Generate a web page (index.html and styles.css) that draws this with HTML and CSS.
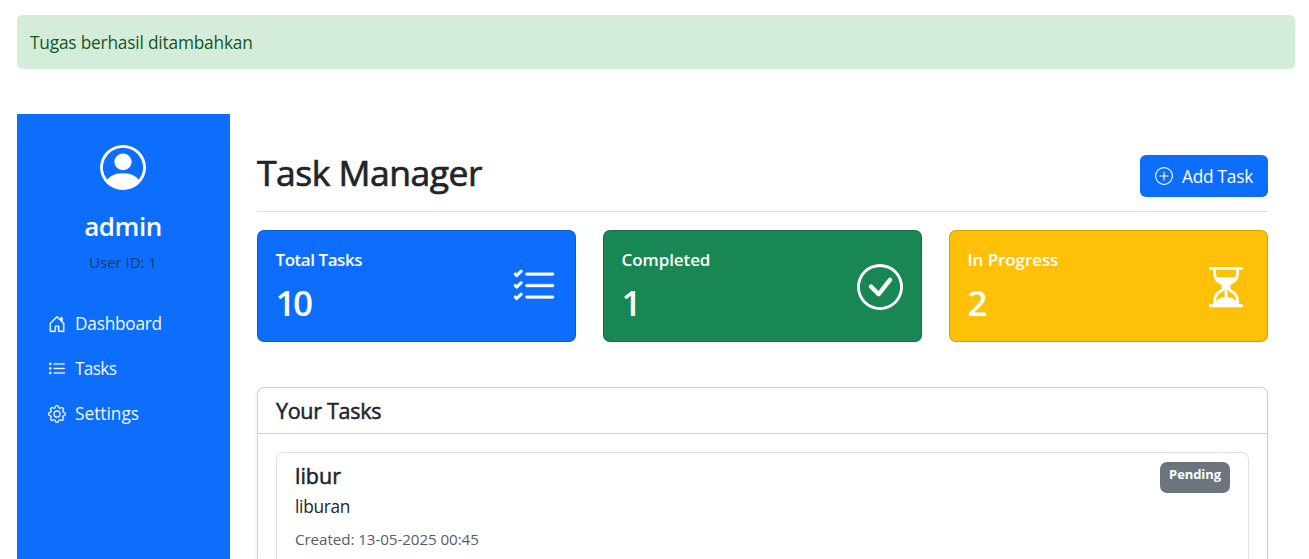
FILE: index.html
```html
<!DOCTYPE html>
<html lang="id">
<head>
<meta charset="utf-8">
<title>Task Manager</title>
<link rel="stylesheet" href="styles.css">
</head>
<body>
<div class="alert"><span class="alert-text">Tugas berhasil ditambahkan</span></div>
<div class="layout">
  <aside class="sidebar">
    <div class="profile">
      <svg class="avatar" viewBox="0 0 16 16" preserveAspectRatio="none" fill="currentColor"><path d="M11 6a3 3 0 1 1-6 0 3 3 0 0 1 6 0"/><path fill-rule="evenodd" d="M0 8a8 8 0 1 1 16 0A8 8 0 0 1 0 8m8-7a7 7 0 0 0-5.468 11.37C3.242 11.226 4.805 10 8 10s4.757 1.225 5.468 2.37A7 7 0 0 0 8 1"/></svg>
      <h4 class="username">admin</h4>
      <small class="user-id">User ID: 1</small>
    </div>
    <nav class="nav">
      <a class="nav-link"><svg class="icon" viewBox="0 0 16 16" fill="currentColor" stroke="currentColor" stroke-width=".25"><path d="M8.354 1.146a.5.5 0 0 0-.708 0l-6 6A.5.5 0 0 0 1.5 7.5v7a.5.5 0 0 0 .5.5h4.5a.5.5 0 0 0 .5-.5v-4h2v4a.5.5 0 0 0 .5.5H14a.5.5 0 0 0 .5-.5v-7a.5.5 0 0 0-.146-.354L13 5.793V2.5a.5.5 0 0 0-.5-.5h-1a.5.5 0 0 0-.5.5v1.293zM2.5 14V7.707l5.5-5.5 5.5 5.5V14H10v-4a.5.5 0 0 0-.5-.5h-3a.5.5 0 0 0-.5.5v4z"/></svg><span class="t-dashboard">Dashboard</span></a>
      <a class="nav-link"><svg class="icon" viewBox="0 0 16 16" fill="currentColor" stroke="currentColor" stroke-width=".25"><path fill-rule="evenodd" d="M5 11.5a.5.5 0 0 1 .5-.5h9a.5.5 0 0 1 0 1h-9a.5.5 0 0 1-.5-.5m0-4a.5.5 0 0 1 .5-.5h9a.5.5 0 0 1 0 1h-9a.5.5 0 0 1-.5-.5m0-4a.5.5 0 0 1 .5-.5h9a.5.5 0 0 1 0 1h-9a.5.5 0 0 1-.5-.5m-3 1a1 1 0 1 0 0-2 1 1 0 0 0 0 2m0 4a1 1 0 1 0 0-2 1 1 0 0 0 0 2m0 4a1 1 0 1 0 0-2 1 1 0 0 0 0 2"/></svg><span class="t-tasks">Tasks</span></a>
      <a class="nav-link"><svg class="icon" viewBox="0 0 16 16" fill="currentColor" stroke="currentColor" stroke-width=".15"><path d="M8 4.754a3.246 3.246 0 1 0 0 6.492 3.246 3.246 0 0 0 0-6.492M5.754 8a2.246 2.246 0 1 1 4.492 0 2.246 2.246 0 0 1-4.492 0"/><path d="M9.796 1.343c-.527-1.79-3.065-1.79-3.592 0l-.094.319a.873.873 0 0 1-1.255.52l-.292-.16c-1.64-.892-3.433.902-2.54 2.541l.159.292a.873.873 0 0 1-.52 1.255l-.319.094c-1.79.527-1.79 3.065 0 3.592l.319.094a.873.873 0 0 1 .52 1.255l-.16.292c-.892 1.64.901 3.434 2.541 2.54l.292-.159a.873.873 0 0 1 1.255.52l.094.319c.527 1.79 3.065 1.79 3.592 0l.094-.319a.873.873 0 0 1 1.255-.52l.292.16c1.64.893 3.434-.902 2.54-2.541l-.159-.292a.873.873 0 0 1 .52-1.255l.319-.094c1.79-.527 1.79-3.065 0-3.592l-.319-.094a.873.873 0 0 1-.52-1.255l.16-.292c.893-1.64-.902-3.433-2.541-2.54l-.292.159a.873.873 0 0 1-1.255-.52zm-2.633.283c.246-.835 1.428-.835 1.674 0l.094.319a1.873 1.873 0 0 0 2.693 1.115l.291-.16c.764-.415 1.6.42 1.184 1.185l-.159.292a1.873 1.873 0 0 0 1.116 2.692l.318.094c.835.246.835 1.428 0 1.674l-.319.094a1.873 1.873 0 0 0-1.115 2.693l.16.291c.415.764-.42 1.6-1.185 1.184l-.291-.159a1.873 1.873 0 0 0-2.693 1.116l-.094.318c-.246.835-1.428.835-1.674 0l-.094-.319a1.873 1.873 0 0 0-2.692-1.115l-.292.16c-.764.415-1.6-.42-1.184-1.185l.159-.291A1.873 1.873 0 0 0 1.945 8.93l-.319-.094c-.835-.246-.835-1.428 0-1.674l.319-.094A1.873 1.873 0 0 0 3.06 4.377l-.16-.292c-.415-.764.42-1.6 1.185-1.184l.292.159a1.873 1.873 0 0 0 2.692-1.115z"/></svg><span class="t-settings">Settings</span></a>
    </nav>
  </aside>
  <main class="content">
    <header class="page-head">
      <h1 class="page-title">Task Manager</h1>
      <button class="add-btn"><svg class="icon" viewBox="0 0 16 16" fill="currentColor"><path d="M8 15A7 7 0 1 1 8 1a7 7 0 0 1 0 14m0 1A8 8 0 1 0 8 0a8 8 0 0 0 0 16"/><path d="M8 4a.5.5 0 0 1 .5.5v3h3a.5.5 0 0 1 0 1h-3v3a.5.5 0 0 1-1 0v-3h-3a.5.5 0 0 1 0-1h3v-3A.5.5 0 0 1 8 4"/></svg><span>Add Task</span></button>
    </header>
    <section class="stats">
      <div class="stat stat-blue">
        <div><h5 class="stat-label t-total">Total Tasks</h5><div class="stat-value">10</div></div>
        <svg class="stat-icon" viewBox="0 0 16 16" fill="currentColor" stroke="currentColor" stroke-width=".12"><path fill-rule="evenodd" d="M5 11.5a.5.5 0 0 1 .5-.5h9a.5.5 0 0 1 0 1h-9a.5.5 0 0 1-.5-.5m0-4a.5.5 0 0 1 .5-.5h9a.5.5 0 0 1 0 1h-9a.5.5 0 0 1-.5-.5m0-4a.5.5 0 0 1 .5-.5h9a.5.5 0 0 1 0 1h-9a.5.5 0 0 1-.5-.5M3.854 2.146a.5.5 0 0 1 0 .708l-1.5 1.5a.5.5 0 0 1-.708 0l-.5-.5a.5.5 0 1 1 .708-.708L2 3.293l1.146-1.147a.5.5 0 0 1 .708 0m0 4a.5.5 0 0 1 0 .708l-1.5 1.5a.5.5 0 0 1-.708 0l-.5-.5a.5.5 0 1 1 .708-.708L2 7.293l1.146-1.147a.5.5 0 0 1 .708 0m0 4a.5.5 0 0 1 0 .708l-1.5 1.5a.5.5 0 0 1-.708 0l-.5-.5a.5.5 0 0 1 .708-.708l.146.147 1.146-1.147a.5.5 0 0 1 .708 0"/></svg>
      </div>
      <div class="stat stat-green">
        <div><h5 class="stat-label">Completed</h5><div class="stat-value">1</div></div>
        <svg class="stat-icon" viewBox="0 0 16 16" fill="currentColor"><path d="M8 15A7 7 0 1 1 8 1a7 7 0 0 1 0 14m0 1A8 8 0 1 0 8 0a8 8 0 0 0 0 16"/><path d="m10.97 4.97-.02.022-3.473 4.425-2.093-2.094a.75.75 0 0 0-1.06 1.06L6.97 11.03a.75.75 0 0 0 1.079-.02l3.992-4.99a.75.75 0 0 0-1.071-1.05"/></svg>
      </div>
      <div class="stat stat-yellow">
        <div><h5 class="stat-label">In Progress</h5><div class="stat-value">2</div></div>
        <svg class="stat-icon" viewBox="0 0 16 16" fill="currentColor"><path d="M2.5 15a.5.5 0 1 1 0-1h1v-1a4.5 4.5 0 0 1 2.557-4.06c.29-.139.443-.377.443-.59v-.7c0-.213-.154-.451-.443-.59A4.5 4.5 0 0 1 3.5 3V2h-1a.5.5 0 0 1 0-1h11a.5.5 0 0 1 0 1h-1v1a4.5 4.5 0 0 1-2.557 4.06c-.29.139-.443.377-.443.59v.7c0 .213.154.451.443.59A4.5 4.5 0 0 1 12.5 13v1h1a.5.5 0 0 1 0 1zm2-13v1c0 .537.12 1.045.337 1.5h6.326c.216-.455.337-.963.337-1.5V2zm3 6.35c0 .701-.478 1.236-1.011 1.492A3.5 3.5 0 0 0 4.5 13s.866-1.299 3-1.48zm1 0v3.17c2.134.181 3 1.48 3 1.48a3.5 3.5 0 0 0-1.989-3.158C8.978 9.586 8.5 9.052 8.5 8.351z"/></svg>
      </div>
    </section>
    <section class="card">
      <div class="card-head"><h5 class="card-title">Your Tasks</h5></div>
      <div class="card-body">
        <article class="task">
          <div>
            <h5 class="task-title">libur</h5>
            <p class="task-desc">liburan</p>
            <small class="task-date">Created: 13-05-2025 00:45</small>
          </div>
          <span class="badge">Pending</span>
        </article>
      </div>
    </section>
  </main>
</div>
</body>
</html>
```
FILE: styles.css
```css
* { box-sizing: border-box; }
body {
  display: flex;
  flex-direction: column;
  margin: 0;
  height: 100vh;
  overflow: hidden;
  padding: 15px 14px 0 17px;
  background: #fff;
  color: #212529;
  font-family: "Open Sans", "Noto Sans", sans-serif;
  font-size: 17.3px;
  line-height: 27px;
}
h1, h4, h5, p { margin: 0; }
svg { flex: none; display: block; }
.alert {
  flex: none;
  height: 54px;
  padding: 14px 13px;
  border-radius: 5px;
  background: #d4edda;
  color: #155724;
}
.alert-text { letter-spacing: -.19px; }
.layout { display: flex; flex: 1; min-height: 0; margin-top: 45px; }
.sidebar {
  flex: none;
  width: 213px;
  padding-top: 31px;
  background: #0d6efd;
  color: #fff;
}
.profile { display: flex; flex-direction: column; align-items: center; padding-right: 1px; }
.avatar { width: 46px; height: 45px; }
.username { margin-top: 20px; font-size: 26px; font-weight: 600; line-height: 32px; letter-spacing: -.45px; }
.user-id { margin-top: 8px; font-size: 15.2px; line-height: 24px; letter-spacing: -.1px; color: rgba(33, 37, 41, .75); }
.nav { margin-top: 27px; padding-left: 31px; }
.nav-link { display: flex; align-items: center; gap: 9px; height: 45px; color: rgba(255, 255, 255, .97); }
.t-dashboard { letter-spacing: -.25px; }
.t-tasks { letter-spacing: -.7px; }
.icon { width: 18px; height: 18px; }
.content {
  display: flex;
  flex: 1;
  flex-direction: column;
  min-height: 0;
  padding: 41px 27px 0;
}
.page-head {
  display: flex;
  flex: none;
  justify-content: space-between;
  height: 57px;
  border-bottom: 1px solid #dee2e6;
}
.page-title {
  font-size: 35.5px;
  font-weight: 500;
  line-height: 35px;
  letter-spacing: -.5px;
  -webkit-text-stroke: .7px currentColor;
}
.add-btn {
  display: flex;
  align-items: center;
  gap: 9px;
  width: 128px;
  height: 42px;
  padding: 0 0 0 15px;
  border: 0;
  border-radius: 6px;
  background: #0d6efd;
  color: #fff;
  font: inherit;
  letter-spacing: -.25px;
  white-space: nowrap;
}
.stats { display: grid; flex: none; grid-template-columns: repeat(3, 319px); gap: 27px; margin-top: 18px; }
.stat {
  display: flex;
  justify-content: space-between;
  align-items: center;
  height: 112px;
  padding: 0 18px 0 17.5px;
  border: 1px solid rgba(0, 0, 0, .175);
  border-radius: 7px;
  color: #fff;
}
.stat-blue { background-color: #0d6efd; }
.stat-green { background-color: #198754; }
.stat-yellow { background-color: #ffc107; }
.stat-label { font-size: 17px; font-weight: 600; line-height: 22px; letter-spacing: -.08px; }
.t-total { letter-spacing: -.45px; }
.stat-value { margin-top: 10px; font-size: 35px; font-weight: 600; line-height: 43px; letter-spacing: -2.5px; }
.stat-icon { width: 46px; height: 46px; margin-top: 2px; }
.card {
  display: flex;
  flex: 1;
  flex-direction: column;
  min-height: 0;
  margin-top: 45px;
  border: 1px solid #d0d1d2;
  border-bottom: 0;
  border-radius: 7px 7px 0 0;
  box-shadow: 0 2px 4px rgba(0, 0, 0, .075);
}
.card-head { flex: none; height: 46px; padding: 9px 18px; border-bottom: 1px solid #d0d1d2; }
.card-title, .task-title {
  font-size: 21.5px;
  font-weight: 500;
  line-height: 27px;
  letter-spacing: -.3px;
  -webkit-text-stroke: .5px currentColor;
}
.task-title { letter-spacing: 0; }
.card-body { display: flex; flex: 1; min-height: 0; padding: 18px 18px 0; }
.task {
  display: flex;
  flex: 1;
  justify-content: space-between;
  padding: 9px 18px 0;
  border: 1px solid #dee2e6;
  border-bottom: 0;
  border-radius: 7px 7px 0 0;
}
.task-desc { margin-top: 4px; letter-spacing: -.3px; }
.task-date { display: block; margin-top: 7px; font-size: 15.2px; line-height: 24px; letter-spacing: -.08px; color: #595c5f; }
.badge {
  width: 70px;
  height: 31px;
  border-radius: 7px;
  background: #6c757d;
  color: #fff;
  font-size: 13px;
  font-weight: 700;
  line-height: 25px;
  letter-spacing: -.1px;
  text-align: center;
}
```
